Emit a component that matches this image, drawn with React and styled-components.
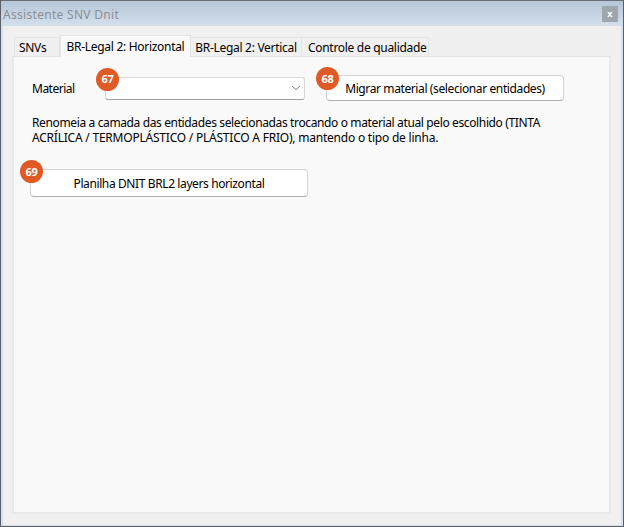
import React from 'react';
import styled, { createGlobalStyle } from 'styled-components';
import { ChevronDown } from 'lucide-react';

const Global = createGlobalStyle`
html,body{margin:0;padding:0;width:624px;height:527px;overflow:hidden;background:#f0f0f0;}
*{box-sizing:border-box;}
`

const Win = styled.div`
width:624px;
height:527px;
display:flex;
flex-direction:column;
border:1px solid #5b6068;
border-top-color:#6a6f76;
background:#f0f0f0;
font-family:"Noto Sans","Open Sans",sans-serif;
font-size:12px;
letter-spacing:-0.3px;
color:#000;
`

const TitleBar = styled.div`
height:25px;
flex:none;
display:flex;
align-items:center;
justify-content:space-between;
padding:1px 5px 0 2px;
background:linear-gradient(#b6c6d6,#d4e0ec);
color:#8b8f94;
letter-spacing:0.3px;
`

const CloseBtn = styled.div`
width:16px;
height:16px;
margin-top:-1px;
display:flex;
align-items:center;
justify-content:center;
background:#9ea6ae;
color:#fff;
font-size:9px;
font-weight:bold;
line-height:1;
`

const Body = styled.div`
flex:1;
display:flex;
flex-direction:column;
padding:9px 10px 11px 9px;
border:solid #d4e0ec;
border-width:0 2px 1px 2px;
`

const Tabs = styled.div`
display:flex;
align-items:flex-end;
height:22px;
flex:none;
padding-left:2px;
position:relative;
z-index:1;
margin-bottom:-1px;
`

const Tab = styled.div`
height:${p=>p.$active?'22px':'20px'};
width:${p=>p.$w}px;
padding-left:${p=>p.$pl||0}px;
display:flex;
align-items:center;
justify-content:${p=>p.$pl?'flex-start':'center'};
white-space:nowrap;
background:${p=>p.$active?'#f9f9f9':'#f0f0f0'};
border:1px solid #e4e4e4;
border-bottom:${p=>p.$active?'none':'1px solid #e4e4e4'};
border-left:${p=>p.$first||p.$active?'1px solid #e4e4e4':'none'};
`

const Panel = styled.div`
flex:1;
background:#f9f9f9;
border:2px solid #e8e8e8;
border-top:1px solid #e4e4e4;
padding:19px 0 0 18px;
display:flex;
flex-direction:column;
`

const Row = styled.div`
display:flex;
align-items:center;
height:24px;
`

const Label = styled.div`
width:73px;
flex:none;
letter-spacing:-0.5px;
`

const Field = styled.div`
position:relative;
width:200px;
height:23px;
display:flex;
align-items:center;
justify-content:flex-end;
padding-right:1px;
background:#fff;
border:1px solid #d8d8d8;
border-bottom-color:#a0a0a0;
border-radius:3px;
color:#333;
`

const Button = styled.div`
position:relative;
display:flex;
align-items:center;
justify-content:center;
white-space:nowrap;
background:#fff;
border:1px solid #d4d4d4;
border-bottom-color:#aeaeae;
border-radius:4px;
letter-spacing:-0.39px;
width:${p=>p.$w}px;
height:${p=>p.$h}px;
margin-left:${p=>p.$ml||0}px;
margin-top:${p=>p.$mt||0}px;
`

const Badge = styled.div`
position:absolute;
left:${p=>p.$x}px;
top:${p=>p.$y}px;
width:23px;
height:23px;
padding-bottom:1px;
border-radius:50%;
background:#e05a26;
color:#fff;
font-size:11px;
font-weight:bold;
letter-spacing:-0.2px;
display:flex;
align-items:center;
justify-content:center;
`

const Desc = styled.div`
margin:15px 0 0 0;
line-height:15px;
white-space:nowrap;
`

const Line = styled.div`
letter-spacing:${p=>p.$ls}px;
`

const App = () => {
  return <>
    <Global/>
    <Win>
      <TitleBar>
        <span>Assistente SNV Dnit</span>
        <CloseBtn>x</CloseBtn>
      </TitleBar>
      <Body>
        <Tabs>
          <Tab $first $w={46} $pl={4}>SNVs</Tab>
          <Tab $active $w={131}>BR-Legal 2: Horizontal</Tab>
          <Tab $w={111}>BR-Legal 2: Vertical</Tab>
          <Tab $w={127} $pl={6}>Controle de qualidade</Tab>
        </Tabs>
        <Panel>
          <Row>
            <Label>Material</Label>
            <Field>
              <Badge $x={-10} $y={-10}>67</Badge>
              <ChevronDown size={14} strokeWidth={1.2}/>
            </Field>
            <Button $w={238} $h={26} $ml={21}>
              <Badge $x={-11} $y={-9}>68</Badge>
              Migrar material (selecionar entidades)
            </Button>
          </Row>
          <Desc>
            <Line $ls={-0.37}>Renomeia a camada das entidades selecionadas trocando o material atual pelo escolhido (TINTA</Line>
            <Line $ls={-0.22}>ACRÍLICA / TERMOPLÁSTICO / PLÁSTICO A FRIO), mantendo o tipo de linha.</Line>
          </Desc>
          <Button $w={278} $h={28} $mt={24} $ml={-2}>
            <Badge $x={-11} $y={-10}>69</Badge>
            Planilha DNIT BRL2 layers horizontal
          </Button>
        </Panel>
      </Body>
    </Win>
  </>
}

export default App;
